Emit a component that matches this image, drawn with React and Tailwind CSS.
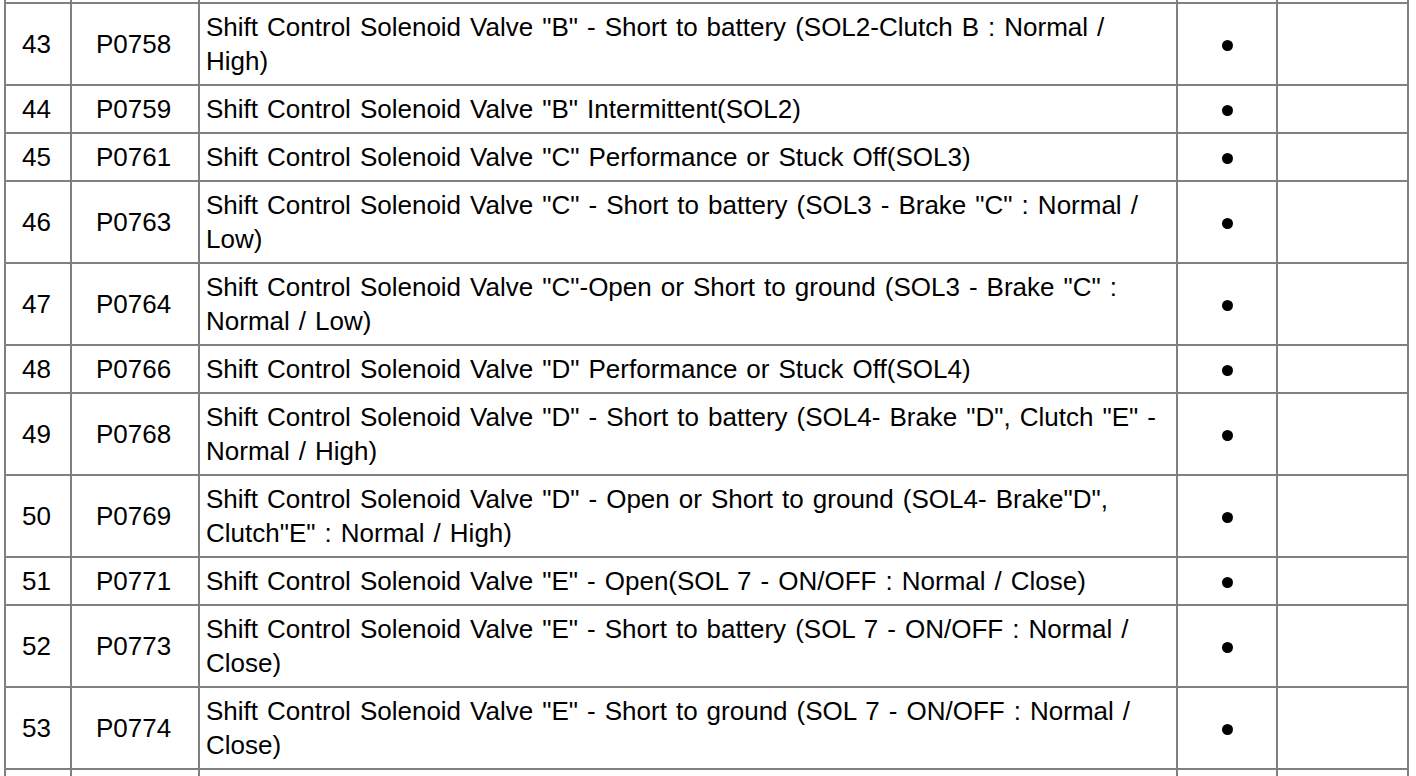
const rows = [
  { no: '43', code: 'P0758', lines: ['Shift Control Solenoid Valve "B" - Short to battery (SOL2-Clutch B : Normal /', 'High)'] },
  { no: '44', code: 'P0759', lines: ['Shift Control Solenoid Valve "B" Intermittent(SOL2)'] },
  { no: '45', code: 'P0761', lines: ['Shift Control Solenoid Valve "C" Performance or Stuck Off(SOL3)'] },
  { no: '46', code: 'P0763', lines: ['Shift Control Solenoid Valve "C" - Short to battery (SOL3 - Brake "C" : Normal /', 'Low)'] },
  { no: '47', code: 'P0764', lines: ['Shift Control Solenoid Valve "C"-Open or Short to ground (SOL3 - Brake "C" :', 'Normal / Low)'] },
  { no: '48', code: 'P0766', lines: ['Shift Control Solenoid Valve "D" Performance or Stuck Off(SOL4)'] },
  { no: '49', code: 'P0768', lines: ['Shift Control Solenoid Valve "D" - Short to battery (SOL4- Brake "D", Clutch "E" -', 'Normal / High)'] },
  { no: '50', code: 'P0769', lines: ['Shift Control Solenoid Valve "D" - Open or Short to ground (SOL4- Brake"D",', 'Clutch"E" : Normal / High)'] },
  { no: '51', code: 'P0771', lines: ['Shift Control Solenoid Valve "E" - Open(SOL 7 - ON/OFF : Normal / Close)'] },
  { no: '52', code: 'P0773', lines: ['Shift Control Solenoid Valve "E" - Short to battery (SOL 7 - ON/OFF : Normal /', 'Close)'] },
  { no: '53', code: 'P0774', lines: ['Shift Control Solenoid Valve "E" - Short to ground (SOL 7 - ON/OFF : Normal /', 'Close)'] },
];

function Cells({ h, children }) {
  return (
    <div className={`flex border-b-2 border-[#808080] ${h || ''}`}>
      {children}
    </div>
  );
}

function Row({ no, code, lines }) {
  return (
    <Cells>
      <div className="w-[66px] shrink-0 border-r-2 border-[#808080] flex items-center justify-center pr-[3px]">{no}</div>
      <div className="w-[128px] shrink-0 border-r-2 border-[#808080] flex items-center justify-center pr-[3px]">{code}</div>
      <div className="w-[978px] shrink-0 border-r-2 border-[#808080] py-[6px] pl-[6px] pr-[4px] [word-spacing:1.8px]">
        {lines.map((l, i) => (
          <div key={i} className="whitespace-nowrap">{l}</div>
        ))}
      </div>
      <div className="w-[100px] shrink-0 border-r-2 border-[#808080] flex items-center justify-center">
        <div className="w-[11px] h-[11px] rounded-full bg-black mt-[2px]" />
      </div>
      <div className="w-[131px] shrink-0 border-r-2 border-[#808080]" />
    </Cells>
  );
}

function EmptyRow({ h }) {
  return (
    <Cells h={h}>
      <div className="w-[66px] shrink-0 border-r-2 border-[#808080]" />
      <div className="w-[128px] shrink-0 border-r-2 border-[#808080]" />
      <div className="w-[978px] shrink-0 border-r-2 border-[#808080]" />
      <div className="w-[100px] shrink-0 border-r-2 border-[#808080]" />
      <div className="w-[131px] shrink-0 border-r-2 border-[#808080]" />
    </Cells>
  );
}

export default function App() {
  return (
    <div className="h-[776px] w-[1416px] overflow-hidden bg-white">
      <div
        className="ml-[4px] w-[1405px] border-l-2 border-[#808080] text-black text-[26px] leading-[34px]"
        style={{ fontFamily: '"Liberation Sans", Arial, sans-serif' }}
      >
        <EmptyRow h="h-[4px]" />
        {rows.map((r) => (
          <Row key={r.no} {...r} />
        ))}
        <EmptyRow h="h-[48px]" />
      </div>
    </div>
  );
}
